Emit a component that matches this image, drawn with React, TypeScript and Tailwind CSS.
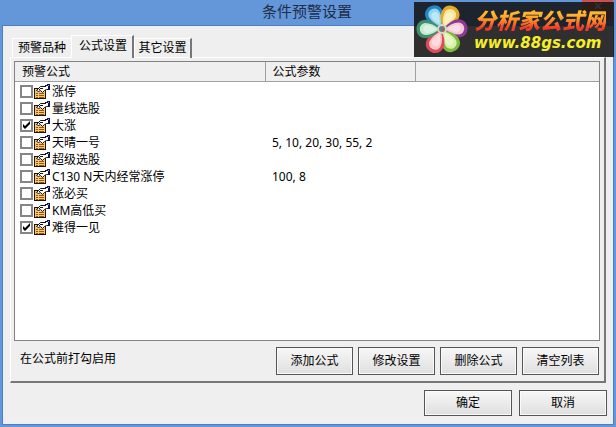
import React, { useState } from 'react';

interface Formula {
  id: number;
  name: string;
  params: string;
  enabled: boolean;
}

const initialFormulas: Formula[] = [
  { id: 1, name: '涨停', params: '', enabled: false },
  { id: 2, name: '量线选股', params: '', enabled: false },
  { id: 3, name: '大涨', params: '', enabled: true },
  { id: 4, name: '天晴一号', params: '5, 10, 20, 30, 55, 2', enabled: false },
  { id: 5, name: '超级选股', params: '', enabled: false },
  { id: 6, name: 'C130 N天内经常涨停', params: '100, 8', enabled: false },
  { id: 7, name: '涨必买', params: '', enabled: false },
  { id: 8, name: 'KM高低买', params: '', enabled: false },
  { id: 9, name: '难得一见', params: '', enabled: true },
];

const tabs = ['预警品种', '公式设置', '其它设置'];
const listActions = ['添加公式', '修改设置', '删除公式', '清空列表'];

const FormulaIcon = () => (
  <svg width="16" height="16" viewBox="0 0 16 16" className="shrink-0">
    <g shapeRendering="crispEdges">
      <path d="M0 4h12v11H0z" fill="#1c1408" />
      <path d="M1 5h10v9H1z" fill="#ffc56e" />
      <path d="M2 9h2v1h-2zM5 9h5v1h-5zM2 11h2v1h-2zM5 11h5v1h-5zM2 13h2v1h-2zM5 13h5v1h-5z" fill="#8a5a1c" />
    </g>
    <path d="M2.5 6.5L6.5 2.5H12.5V5.5L10.5 6.5L8.5 8.5L6.5 6.5L4.5 7.5Z" fill="#fff" stroke="#111" />
    <g shapeRendering="crispEdges">
      <path d="M6 4h3v1h-3zM5 5h1v1h-1z" fill="#111" />
      <path d="M11 1h2v-1h3v6h-3v-1h-1v-3h-1z" fill="#10104a" />
      <path d="M12 2h2v3h-2z" fill="#fff" />
      <path d="M14 1h1v1h-1z" fill="#9aa4e0" />
    </g>
  </svg>
);

const petals = [
  { angle: -28, edge: '#2384c6', fill: '#8fd8ee' },
  { angle: 30, edge: '#e3a92b', fill: '#f8e79a' },
  { angle: 88, edge: '#8d3a91', fill: '#f3c6d8' },
  { angle: 148, edge: '#7fba3c', fill: '#d7f2a8' },
  { angle: 205, edge: '#dc4a5c', fill: '#fbc5c8' },
  { angle: 270, edge: '#3f9070', fill: '#c5ead0' },
];

const FlowerLogo = () => (
  <svg width="54" height="52" viewBox="0 0 54 52" className="shrink-0">
    {petals.map((petal) => (
      <g key={petal.angle} transform={`translate(26 25) rotate(${petal.angle})`}>
        <path d="M0 -2C-6 -6 -10 -13 -9 -18C-8 -28 8 -28 9 -18C10 -13 6 -6 0 -2Z" fill={petal.edge} />
        <path d="M0 -3C-4 -7 -6 -12 -6 -17C-5 -24 5 -24 6 -17C6 -12 4 -7 0 -3Z" fill={petal.fill} />
        <path d="M0 -5C-2 -9 -4 -12 -4 -15C-3 -20 3 -20 4 -15C4 -12 2 -9 0 -5Z" fill="#fff" opacity="0.4" />
      </g>
    ))}
    <circle cx="26" cy="25" r="5" fill="#d9d4cc" />
    <circle cx="26" cy="25" r="3" fill="#5f8580" />
    <circle cx="27" cy="26" r="1.5" fill="#b8543f" />
  </svg>
);

const SiteBadge = () => (
  <div className="pointer-events-none absolute top-0.5 right-0.5 flex h-[55px] w-[200px] items-center bg-[#151515]/88 pl-0.5">
    <FlowerLogo />
    <div className="flex flex-col pt-px pl-1 whitespace-nowrap">
      <span className="bg-linear-to-b from-[#ffb52e] from-30% to-[#f03c28] to-80% bg-clip-text text-[22px] leading-[26px] font-black text-transparent italic">
        分析家公式网
      </span>
      <span className="font-['DejaVu_Sans',sans-serif] text-[15px] leading-5 font-bold text-[#f5ee2a] italic">
        www.88gs.com
      </span>
    </div>
  </div>
);

interface DialogButtonProps {
  label: string;
  className: string;
}

const DialogButton = ({ label, className }: DialogButtonProps) => (
  <button
    type="button"
    className={`border border-[#555] bg-linear-to-b from-[#f7f7f7] to-[#dfdfdf] text-center shadow-[inset_0_0_0_1px_#fafafa] ${className}`}
  >
    {label}
  </button>
);

interface FormulaRowProps {
  formula: Formula;
  onToggle: (id: number) => void;
}

const FormulaRow = ({ formula, onToggle }: FormulaRowProps) => (
  <tr className="h-[17px]">
    <td className="p-0 pl-[5px]">
      <div className="flex h-[17px] items-center">
        <span className="relative flex h-[13px] w-[13px] shrink-0">
          <input
            id={`formula-${formula.id}`}
            type="checkbox"
            checked={formula.enabled}
            onChange={() => onToggle(formula.id)}
            className="peer h-[13px] w-[13px] appearance-none border-2 border-[#858585] bg-white"
          />
          <svg viewBox="0 0 13 13" className="pointer-events-none absolute inset-0 hidden peer-checked:block">
            <path d="M3 5v3l2 2 5-5v-3l-5 5z" fill="#000" />
          </svg>
        </span>
        <label htmlFor={`formula-${formula.id}`} className="flex items-center gap-0.5 pl-px whitespace-nowrap">
          <FormulaIcon />
          {formula.name}
        </label>
      </div>
    </td>
    <td className="p-0 pl-[7px]">{formula.params}</td>
    <td className="p-0" />
  </tr>
);

const App = () => {
  const [formulas, setFormulas] = useState(initialFormulas);
  const [activeTab, setActiveTab] = useState('公式设置');

  const handleToggle = (id: number) => {
    setFormulas(formulas.map((f) => (f.id === id ? { ...f, enabled: !f.enabled } : f)));
  };

  return (
    <div className="relative flex min-h-screen flex-col bg-[#6397d9] px-[3px] pb-[3px] font-['Noto_Sans','Noto_Sans_CJK_SC',sans-serif] text-xs leading-4 text-black">
      <header className="relative flex h-[26px] items-center justify-center">
        <h1 className="pr-0.5 pb-1 text-[15px] leading-5 text-[#1f2d48]">条件预警设置</h1>
        <button
          type="button"
          aria-label="关闭"
          className="absolute top-0 right-0 flex h-5 w-[31px] justify-center bg-[#c75050] pt-0.5"
        >
          <svg width="8" height="8" viewBox="0 0 8 8">
            <path d="M1 1l6 6M7 1l-6 6" stroke="#fff" strokeWidth="1.5" />
          </svg>
        </button>
      </header>

      <main className="flex flex-1 flex-col border border-[#e3effb] bg-[#efefef] pt-2 pr-[5px] pb-[7px] pl-[6px] outline-1 outline-[#4f80bd]">
        <div role="tablist" className="relative z-10 -mb-px flex items-end pl-[2px]">
          {tabs.map((tab) => (
            <button
              key={tab}
              type="button"
              role="tab"
              aria-selected={tab === activeTab}
              onClick={() => setActiveTab(tab)}
              className={
                tab === activeTab
                  ? 'h-[23px] w-[63px] border-t border-r-2 border-l border-t-white border-r-[#777] border-l-white bg-[#efefef] pb-0.5 pl-0.5'
                  : 'h-5 w-[59px] border-t border-l border-white pb-0.5 last:w-[58px] last:border-r-2 last:border-r-[#777]'
              }
            >
              {tab}
            </button>
          ))}
        </div>

        <section className="mr-px flex flex-1 flex-col border-t border-r-2 border-b-2 border-l border-t-white border-r-[#777] border-b-[#777] border-l-white px-[3px] pt-[3px]">
          <div className="mr-px flex-1 border border-[#828282] bg-white">
            <table className="w-full table-fixed border-collapse">
              <colgroup>
                <col className="w-[250px]" />
                <col className="w-[150px]" />
                <col />
              </colgroup>
              <thead>
                <tr className="h-[19px] border-b border-[#a0a0a0] bg-[#efefef] text-left">
                  <th className="border-r border-[#a0a0a0] p-0 pt-0.5 pl-[7px] font-normal">预警公式</th>
                  <th className="border-r border-[#a0a0a0] p-0 pt-0.5 pl-[7px] font-normal">公式参数</th>
                  <th className="p-0" />
                </tr>
              </thead>
              <tbody>
                <tr className="h-0.5" />
                {formulas.map((formula) => (
                  <FormulaRow key={formula.id} formula={formula} onToggle={handleToggle} />
                ))}
              </tbody>
            </table>
          </div>

          <div className="flex items-center justify-between py-[6px] pr-0.5 pl-[6px]">
            <p className="pb-1">在公式前打勾启用</p>
            <div className="flex gap-[5px]">
              {listActions.map((action) => (
                <DialogButton key={action} label={action} className="h-7 w-[77px]" />
              ))}
            </div>
          </div>
        </section>

        <footer className="flex justify-end gap-[7px] pt-[7px]">
          <DialogButton label="确定" className="h-[26px] w-[88px]" />
          <DialogButton label="取消" className="h-[26px] w-[88px]" />
        </footer>
      </main>

      <SiteBadge />
    </div>
  );
};

export default App;
